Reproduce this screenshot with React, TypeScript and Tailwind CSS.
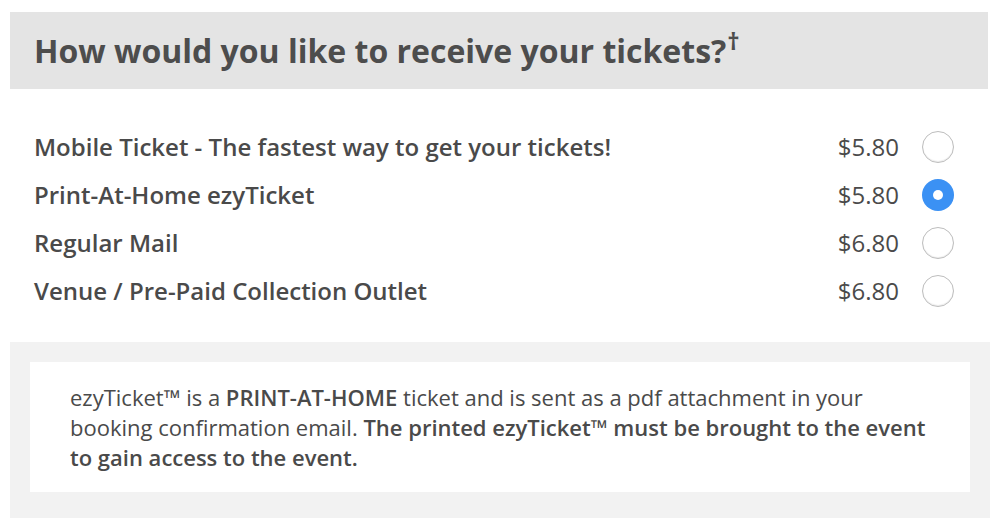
import React from "react";

const options = [
  { label: "Mobile Ticket - The fastest way to get your tickets!", price: "$5.80", selected: false },
  { label: "Print-At-Home ezyTicket", price: "$5.80", selected: true },
  { label: "Regular Mail", price: "$6.80", selected: false },
  { label: "Venue / Pre-Paid Collection Outlet", price: "$6.80", selected: false },
];

function Radio({ selected }: { selected: boolean }) {
  if (selected) {
    return (
      <span className="flex h-[32px] w-[32px] items-center justify-center rounded-full bg-[#3b91f4]">
        <span className="h-[10px] w-[10px] rounded-full bg-white" />
      </span>
    );
  }
  return (
    <span className="block h-[32px] w-[32px] rounded-full border border-[#bdbdbd] bg-white shadow-[inset_0_-1px_1px_rgba(0,0,0,0.08)]" />
  );
}

export default function App() {
  return (
    <div
      className="min-h-[518px] w-[1002px] overflow-hidden bg-white text-[#4a4a4a]"
      style={{ fontFamily: '"Open Sans", "Noto Sans", sans-serif' }}
    >
      <div className="ml-[10px] mr-[14px] mt-[12px] flex h-[77px] items-center bg-[#e4e4e4] px-[24px]">
        <h1 className="text-[32px] font-bold leading-none text-[#4d4d4d]">
          How would you like to receive your tickets?
          <span className="relative top-[-13px] ml-[1px] align-baseline text-[24px] font-bold">†</span>
        </h1>
      </div>

      <div className="ml-[34px] mr-[48px] mt-[34px] flex flex-col">
        {options.map((o) => (
          <div key={o.label} className="flex h-[48px] items-center">
            <span className="flex-1 text-[24px] font-semibold">{o.label}</span>
            <span className="mr-[23px] text-[24px]">{o.price}</span>
            <Radio selected={o.selected} />
          </div>
        ))}
      </div>

      <div className="ml-[10px] mr-[12px] mt-[27px] bg-[#f2f2f2] p-[20px] pb-[30px]">
        <div className="bg-white py-[20px] pl-[40px] pr-[40px] text-[22px] leading-[30px]">
          ezyTicket™ is a <b className="font-semibold">PRINT-AT-HOME</b> ticket and is sent as a pdf attachment in your
          booking confirmation email. <b className="font-semibold">The printed ezyTicket™ must be brought to the event to gain access to the event.</b>
        </div>
      </div>
    </div>
  );
}
